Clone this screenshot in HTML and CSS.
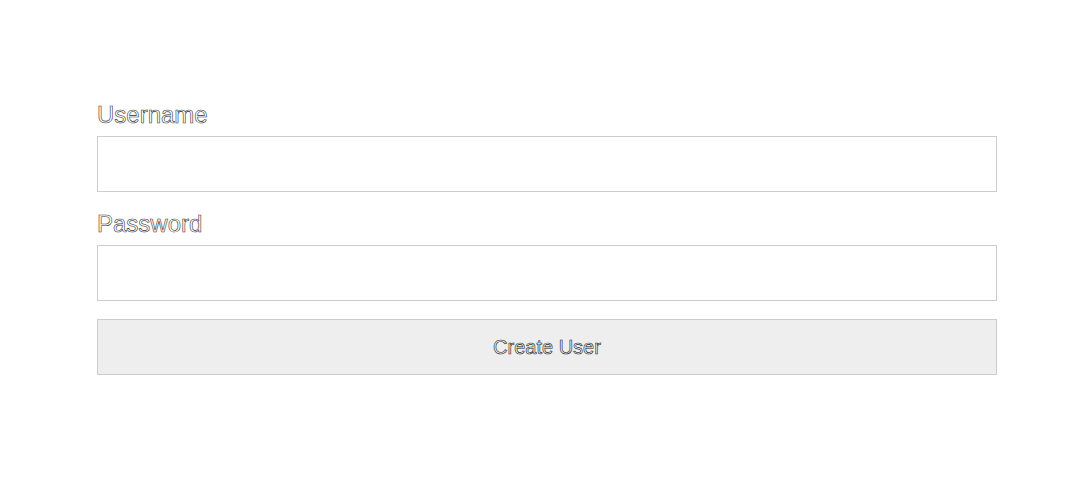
FILE: index.html
```html
<!DOCTYPE html>
<html>
<head>
<meta charset="utf-8">
<link rel="stylesheet" href="styles.css">
</head>
<body>
<div class="page">
  <form class="form">
    <label class="label" for="u">Username</label>
    <input class="field" id="u" type="text">
    <label class="label" for="p">Password</label>
    <input class="field" id="p" type="password">
    <button class="btn" type="button">Create User</button>
  </form>
</div>
</body>
</html>
```
FILE: styles.css
```css
html, body {
  margin: 0;
  padding: 0;
  background: #fff;
}
.page {
  width: 1080px;
  height: 500px;
  box-sizing: border-box;
  padding: 101px 83px 0 97px;
  font-family: "Liberation Sans", Arial, sans-serif;
}
.form {
  display: flex;
  flex-direction: column;
}
.label {
  display: block;
  font-size: 24px;
  line-height: 27px;
  height: 27px;
  color: #fff;
  -webkit-text-stroke: 0.6px #333;
  margin-bottom: 8px;
}
.field {
  display: block;
  box-sizing: border-box;
  width: 900px;
  height: 56px;
  margin: 0 0 18px 0;
  border: 1px solid #ccc;
  background: #fff;
  padding: 0 12px;
  font-size: 20px;
  outline: none;
}
.btn {
  display: block;
  box-sizing: border-box;
  width: 900px;
  height: 56px;
  margin: 0;
  border: 1px solid #ccc;
  background: #eee;
  font-family: "Liberation Sans", Arial, sans-serif;
  font-size: 20px;
  color: #eee;
  -webkit-text-stroke: 0.6px #222;
}
```
